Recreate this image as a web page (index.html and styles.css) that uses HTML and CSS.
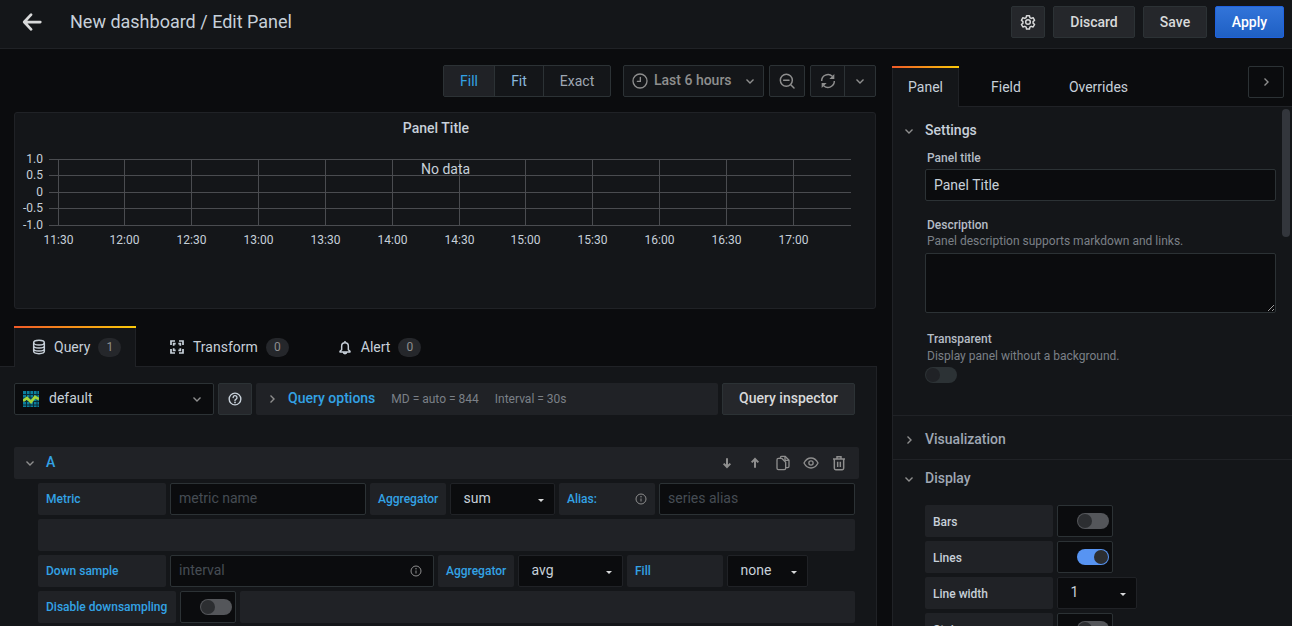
FILE: index.html
```html
<!DOCTYPE html>
<html lang="en">
<head>
<meta charset="utf-8">
<title>Edit Panel</title>
<link rel="stylesheet" href="styles.css">
</head>
<body>
<header class="topbar">
  <svg class="back" viewBox="0 0 24 24"><path d="M11 4 3.500 12 11 20M4 12h17" fill="none" stroke="currentColor" stroke-width="3" stroke-linecap="round" stroke-linejoin="round"/></svg>
  <div class="crumb">New dashboard / Edit Panel</div>
  <div class="top-actions">
    <button class="btn btn-icon"><svg class="ic16" viewBox="0 0 24 24"><g fill="none" stroke="currentColor" stroke-width="2.200" stroke-linejoin="round"><circle cx="12" cy="12" r="3.500"/><path d="M9.800 2.500h4.400l.6 3 2 1.100 2.900-1 2.200 3.800-2.300 2v2.300l2.300 2-2.200 3.800-2.900-1-2 1.100-.6 3H9.800l-.6-3-2-1.100-2.900 1-2.200-3.800 2.300-2v-2.300l-2.300-2 2.200-3.800 2.900 1 2-1.100z"/></g></svg></button>
    <button class="btn btn-discard">Discard</button>
    <button class="btn btn-save">Save</button>
    <button class="btn btn-apply">Apply</button>
  </div>
</header>
<div class="main">
  <section class="left">
    <div class="toolbar">
      <div class="seg">
        <span class="seg-item active">Fill</span><span class="seg-item fit">Fit</span><span class="seg-item exact">Exact</span>
      </div>
      <div class="tool time">
        <svg class="ic16" viewBox="0 0 24 24"><g fill="none" stroke="currentColor" stroke-width="2" stroke-linecap="round"><circle cx="12" cy="12" r="10.500"/><path d="M12.500 6.500v6H8"/></g></svg>
        <span class="time-text">Last 6 hours</span>
        <svg class="chev" viewBox="0 0 12 12"><path d="M2.500 4.500 6 8l3.500-3.500" fill="none" stroke="currentColor" stroke-width="1.400"/></svg>
      </div>
      <div class="tool zoomout">
        <svg class="ic16" viewBox="0 0 24 24"><g fill="none" stroke="currentColor" stroke-width="2.200" stroke-linecap="round"><circle cx="11" cy="11" r="9"/><path d="M7 11h8M18 18l4.500 4.500"/></g></svg>
      </div>
      <div class="tool refresh">
        <span class="refresh-a"><svg class="ic16 sync" viewBox="0 0 24 24"><path d="M2.500 12A9.500 9.500 0 0 1 18.500 5" fill="none" stroke="currentColor" stroke-width="2.200"/><path d="M21.500 12A9.500 9.500 0 0 1 5.500 19" fill="none" stroke="currentColor" stroke-width="2.200"/><path d="M21.500 1.500v7.500H14zM2.500 22.500V15H10z" fill="currentColor"/></svg></span>
        <span class="refresh-b"><svg class="chev" viewBox="0 0 12 12"><path d="M2.500 4.500 6 8l3.500-3.500" fill="none" stroke="currentColor" stroke-width="1.400"/></svg></span>
      </div>
    </div>
    <div class="panel">
      <div class="panel-title">Panel Title</div>
      <svg class="chart" viewBox="0 0 860 120" aria-label="Empty graph">
        <g class="grid">
          <path d="M34 13.500H836M34 29.500H836M34 46.500H836M34 62.500H836M34 79.500H836"/>
          <path d="M43.500 13V80M109.500 13V80M176.500 13V80M243.500 13V80M310.500 13V80M377.500 13V80M444.500 13V80M510.500 13V80M577.500 13V80M644.500 13V80M711.500 13V80M778.500 13V80"/>
        </g>
        <g class="ylab">
          <text x="28" y="17">1.0</text><text x="28" y="33">0.5</text><text x="28" y="50">0</text><text x="28" y="66">-0.5</text><text x="28" y="83">-1.0</text>
        </g>
        <g class="xlab">
          <text x="43.500" y="98">11:30</text><text x="109.500" y="98">12:00</text><text x="176.500" y="98">12:30</text><text x="243.500" y="98">13:00</text><text x="310.500" y="98">13:30</text><text x="377.500" y="98">14:00</text><text x="444.500" y="98">14:30</text><text x="510.500" y="98">15:00</text><text x="577.500" y="98">15:30</text><text x="644.500" y="98">16:00</text><text x="711.500" y="98">16:30</text><text x="778.500" y="98">17:00</text>
        </g>
      </svg>
      <div class="nodata">No data</div>
    </div>
    <nav class="qtabs">
      <div class="qtab on">
        <svg class="ic16" viewBox="0 0 24 24"><g fill="none" stroke="currentColor" stroke-width="2.200"><ellipse cx="12" cy="5.500" rx="8" ry="3.500"/><path d="M4 5.500v13c0 2 3.600 3.500 8 3.500s8-1.500 8-3.500v-13M4 10c0 2 3.600 3.500 8 3.500s8-1.500 8-3.500M4 14.500c0 2 3.600 3.500 8 3.500s8-1.500 8-3.500"/></g></svg>
        <span>Query</span><span class="count">1</span>
      </div>
      <div class="qtab tab-transform">
        <svg class="ic16" viewBox="0 0 24 24"><g fill="none" stroke="currentColor" stroke-width="2.600"><path d="M3 9V3h6M15 3h6v6M21 15v6h-6M9 21H3v-6"/><path d="M7 10V7h3M14 7h3v3M17 14v3h-3M10 17H7v-3"/></g></svg>
        <span>Transform</span><span class="count">0</span>
      </div>
      <div class="qtab tab-alert">
        <svg class="ic16" viewBox="0 0 24 24"><g fill="none" stroke="currentColor" stroke-width="2.200" stroke-linejoin="round"><path d="M7 16v-5.500a5 5 0 0 1 10 0V16l2.500 2.500v1h-15v-1zM9.500 19.500a2.500 2.500 0 0 0 5 0M12 3v2.500"/></g></svg>
        <span>Alert</span><span class="count">0</span>
      </div>
    </nav>
    <div class="qpane">
      <div class="src-row">
        <div class="ds">
          <svg class="ds-logo" viewBox="0 0 16 16"><rect width="16" height="16" fill="#0b7f9c"/><path d="M0 3.500h16M0 7h16M0 10.500h16M0 14h16M3.500 0v16M7 0v16M10.500 0v16M14 0v16" stroke="#0a2a38" stroke-width="1"/><path d="M0 10 4 7l4 4 4-5 4 2" fill="none" stroke="#a5d63a" stroke-width="2.800"/></svg>
          <span class="ds-name">default</span>
          <svg class="chev" viewBox="0 0 12 12"><path d="M2.500 4.500 6 8l3.500-3.500" fill="none" stroke="currentColor" stroke-width="1.400"/></svg>
        </div>
        <div class="help"><svg class="ic14" viewBox="0 0 24 24"><g fill="none" stroke="currentColor" stroke-width="2.400" stroke-linecap="round"><circle cx="12" cy="12" r="10"/><path d="M8.800 9.500a3.300 3.300 0 1 1 4.800 3c-1 .6-1.600 1.100-1.600 2"/></g><circle cx="12" cy="17.800" r="1.500" fill="currentColor"/></svg></div>
        <div class="qopts">
          <svg class="chev-r" viewBox="0 0 12 12"><path d="M4.500 2.500 8 6l-3.500 3.500" fill="none" stroke="currentColor" stroke-width="1.400"/></svg>
          <span class="qopts-title">Query options</span>
          <span class="qopts-meta">MD = auto = 844</span>
          <span class="qopts-meta">Interval = 30s</span>
        </div>
        <button class="btn btn-inspector">Query inspector</button>
      </div>
      <div class="qhead">
        <svg class="chev" viewBox="0 0 12 12"><path d="M2.500 4.500 6 8l3.500-3.500" fill="none" stroke="currentColor" stroke-width="1.400"/></svg>
        <span class="qletter">A</span>
        <div class="qicons">
          <svg class="ic16" viewBox="0 0 24 24"><path d="M12 5v13M7 13l5 5 5-5" fill="none" stroke="currentColor" stroke-width="3"/></svg>
          <svg class="ic16" viewBox="0 0 24 24"><path d="M12 19V6M7 11l5-5 5 5" fill="none" stroke="currentColor" stroke-width="3"/></svg>
          <svg class="ic16" viewBox="0 0 24 24"><g fill="none" stroke="currentColor" stroke-width="2" stroke-linejoin="round"><path d="M8 5V4a2 2 0 0 1 2-2h5l6 6v9a2 2 0 0 1-2 2h-3"/><path d="M15 2v6h6"/><path d="M3 7a2 2 0 0 1 2-2h5l6 6v9a2 2 0 0 1-2 2H5a2 2 0 0 1-2-2z"/></g></svg>
          <svg class="ic16" viewBox="0 0 24 24"><g fill="none" stroke="currentColor" stroke-width="2"><path d="M1.500 12c2.500-4.800 6.200-7.500 10.500-7.500s8 2.700 10.500 7.500c-2.500 4.800-6.200 7.500-10.500 7.500S4 16.800 1.500 12z"/><circle cx="12" cy="12" r="3.200"/></g></svg>
          <svg class="ic16" viewBox="0 0 24 24"><g fill="none" stroke="currentColor" stroke-width="2.200"><path d="M3 6h18M9 6V2.500h6V6M5 6v14a2 2 0 0 0 2 2h10a2 2 0 0 0 2-2V6M10 10v8M14 10v8"/></g></svg>
        </div>
      </div>
      <div class="rows">
        <div class="frow">
          <label class="flabel w128">Metric</label>
          <div class="finput w196"><span class="ph">metric name</span></div>
          <label class="flabel w76">Aggregator</label>
          <div class="fselect w105"><span>sum</span><i class="caret"></i></div>
          <label class="flabel w96 alias">Alias:<svg class="ic12" viewBox="0 0 24 24"><g fill="none" stroke="currentColor" stroke-width="2"><circle cx="12" cy="12" r="10"/><path d="M12 11v6"/></g><circle cx="12" cy="7.500" r="1.500" fill="currentColor"/></svg></label>
          <div class="finput grow"><span class="ph">series alias</span></div>
        </div>
        <div class="frow"><div class="filler"></div></div>
        <div class="frow">
          <label class="flabel w128">Down sample</label>
          <div class="finput w264"><span class="ph">interval</span><svg class="ic12" viewBox="0 0 24 24"><g fill="none" stroke="currentColor" stroke-width="2"><circle cx="12" cy="12" r="10"/><path d="M12 11v6"/></g><circle cx="12" cy="7.500" r="1.500" fill="currentColor"/></svg></div>
          <label class="flabel w76">Aggregator</label>
          <div class="fselect w105"><span>avg</span><i class="caret"></i></div>
          <label class="flabel w96">Fill</label>
          <div class="fselect w81"><span>none</span><i class="caret"></i></div>
        </div>
        <div class="frow">
          <label class="flabel w138">Disable downsampling</label>
          <div class="switchbox"><span class="sw"></span></div>
          <div class="filler"></div>
        </div>
      </div>
    </div>
  </section>
  <aside class="right">
    <nav class="ptabs">
      <div class="ptab on">Panel</div>
      <div class="ptab field">Field</div>
      <div class="ptab over">Overrides</div>
      <div class="collapse"><svg class="chev-r" viewBox="0 0 12 12"><path d="M4.500 2.500 8 6l-3.500 3.500" fill="none" stroke="currentColor" stroke-width="1.400"/></svg></div>
    </nav>
    <div class="pbody">
      <div class="scrollthumb"></div>
      <section class="group settings">
        <h3 class="ghead"><svg class="chev" viewBox="0 0 12 12"><path d="M2.500 4.500 6 8l3.500-3.500" fill="none" stroke="currentColor" stroke-width="1.400"/></svg>Settings</h3>
        <div class="fld first">
          <div class="lbl">Panel title</div>
          <div class="pinput">Panel Title</div>
        </div>
        <div class="fld descf">
          <div class="lbl">Description</div>
          <div class="sub">Panel description supports markdown and links.</div>
          <textarea class="parea" aria-label="Description"></textarea>
        </div>
        <div class="fld transp">
          <div class="lbl">Transparent</div>
          <div class="sub">Display panel without a background.</div>
          <span class="sw dark"></span>
        </div>
      </section>
      <section class="group viz">
        <h3 class="ghead"><svg class="chev-r" viewBox="0 0 12 12"><path d="M4.500 2.500 8 6l-3.500 3.500" fill="none" stroke="currentColor" stroke-width="1.400"/></svg>Visualization</h3>
      </section>
      <section class="group display">
        <h3 class="ghead"><svg class="chev" viewBox="0 0 12 12"><path d="M2.500 4.500 6 8l3.500-3.500" fill="none" stroke="currentColor" stroke-width="1.400"/></svg>Display</h3>
        <div class="drows">
          <div class="frow"><label class="flabel w128 plain">Bars</label><div class="switchbox"><span class="sw"></span></div></div>
          <div class="frow"><label class="flabel w128 plain">Lines</label><div class="switchbox"><span class="sw on"></span></div></div>
          <div class="frow"><label class="flabel w128 plain">Line width</label><div class="fselect w80"><span>1</span><i class="caret"></i></div></div>
          <div class="frow"><label class="flabel w128 plain">Staircase</label><div class="switchbox"><span class="sw"></span></div></div>
        </div>
      </section>
    </div>
  </aside>
</div>
</body>
</html>
```

FILE: styles.css
```css
* { box-sizing: border-box; }
html, body { margin: 0; height: 100%; overflow: hidden; }
body { background: #0b0c0e; color: #c7d0d9; font: 14px/1.5 Roboto, sans-serif; }
svg { display: block; flex: none; }
.ic12 { width: 12px; height: 12px; }
.ic14 { width: 14px; height: 14px; }
.ic16 { width: 16px; height: 16px; }
.chev, .chev-r { width: 12px; height: 12px; color: #8e8e8e; }

.topbar { height: 49px; background: #141619; border-bottom: 1px solid #202226; display: flex; align-items: center; padding: 0 8px 4px 21px; }
.back { width: 22px; height: 22px; color: #d8d9da; }
.crumb { margin-left: 27px; font-size: 18px; line-height: 24px; color: #c7d0d9; }
.top-actions { margin-left: auto; display: flex; gap: 8px; align-items: center; }
.btn { height: 32px; border: 1px solid #2c3235; border-radius: 2px; background: #25272b; color: #d8d9da; font: 500 14px/1 Roboto, sans-serif; padding: 0; display: flex; align-items: center; justify-content: center; }
.btn-icon { width: 34px; }
.btn-discard { width: 82px; }
.btn-save { width: 64px; }
.btn-apply { width: 69px; border-color: #1f62e0; color: #fff; background: linear-gradient(180deg, #3274d9, #1f60c4); }

.main { display: flex; height: 577px; }
.left { width: 877px; flex: none; display: flex; flex-direction: column; }
.toolbar { height: 63px; padding: 16px 1px 0 443px; display: flex; align-items: flex-start; }
.seg { display: flex; height: 32px; border: 1px solid #2c3235; border-radius: 2px; background: #141619; color: #8e8e8e; }
.seg-item { display: flex; align-items: center; justify-content: center; border-left: 1px solid #2c3235; }
.seg-item.active { width: 50px; border-left: 0; background: #202226; color: #33a2e5; }
.seg-item.fit { width: 49px; color: #8ab8dd; }
.seg-item.exact { width: 67px; color: #9fa7b3; }
.tool { height: 32px; border: 1px solid #2c3235; border-radius: 2px; background: #141619; color: #8e8e8e; display: flex; align-items: center; }
.time { width: 142px; margin-left: 12px; padding-left: 8px; }
.time-text { margin-left: 6px; padding-bottom: 2px; font-weight: 500; }
.time .chev { margin-left: auto; margin-right: 7px; }
.zoomout { width: 36px; margin-left: 5px; justify-content: center; }
.refresh { width: 66px; margin-left: 5px; }
.refresh-a { width: 34px; height: 100%; display: flex; align-items: center; justify-content: center; border-right: 1px solid #2c3235; }
.refresh-b { flex: 1; display: flex; justify-content: center; }

.panel { position: relative; margin-left: 14px; width: 862px; height: 197px; background: #141619; border: 1px solid #202226; border-radius: 3px; }
.panel-title { height: 31px; padding-right: 18px; text-align: center; font-weight: 500; line-height: 30px; color: #c7d0d9; }
.chart { width: 860px; height: 120px; margin-top: 2px; }
.grid path { fill: none; stroke: #4a4c50; stroke-width: 1; }
.chart text { font: 12px Roboto, sans-serif; fill: #c7d0d9; }
.ylab text { text-anchor: end; }
.xlab text { text-anchor: middle; }
.nodata { position: absolute; left: 406px; top: 46px; color: #c7d0d9; line-height: 20px; }

.qtabs { display: flex; height: 40px; margin-top: 17px; padding-left: 14px; }
.qtab { height: 41px; display: flex; align-items: center; padding: 1px 16px 0; gap: 8px; position: relative; }
.qtab.on { width: 122px; padding: 0 0 0 16px; background: #141619; border: 1px solid #202226; border-bottom: 0; border-radius: 3px 3px 0 0; }
.qtab.on svg { margin-right: -1px; }
.qtab.on::before, .ptab.on::before { content: ""; position: absolute; left: -1px; right: -1px; top: -1px; height: 2px; background: linear-gradient(90deg, #f05a28, #fbca0a); }
.tab-transform { margin-left: 17px; }
.tab-alert { margin-left: 16px; }
.count { min-width: 23px; height: 19px; border-radius: 10px; background: #25272b; color: #8e8e8e; font-size: 12px; text-align: center; line-height: 19px; }

.qpane { flex: 1; background: #141619; border-top: 1px solid #202226; border-right: 1px solid #202226; padding: 16px 0 0 14px; overflow: hidden; }
.src-row { display: flex; gap: 4px; height: 32px; padding-right: 21px; }
.ds { width: 200px; background: #0b0c0e; border: 1px solid #2c3235; border-radius: 2px; display: flex; align-items: center; padding-left: 8px; }
.ds-logo { width: 16px; height: 16px; }
.ds-name { margin-left: 10px; padding-bottom: 2px; color: #c7d0d9; }
.ds .chev { margin-left: auto; margin-right: 10px; }
.help { width: 34px; background: #25272b; border: 1px solid #2c3235; border-radius: 2px; display: flex; align-items: center; justify-content: center; color: #c7d0d9; }
.qopts { flex: 1; background: #202226; border-radius: 2px; display: flex; align-items: center; padding-left: 10px; }
.qopts-title { margin-left: 10px; padding-bottom: 2px; color: #33a2e5; font-weight: 500; }
.qopts-meta { margin-left: 16px; font-size: 12px; color: #7b8087; }
.btn-inspector { width: 133px; padding-bottom: 2px; }

.qhead { height: 32px; margin-top: 32px; width: 845px; background: #202226; border-radius: 2px; display: flex; align-items: center; padding-left: 10px; }
.qhead .chev { color: #8e8e8e; }
.qletter { margin-left: 10px; padding-bottom: 2px; color: #33a2e5; font-weight: 500; }
.qicons { margin-left: auto; margin-right: 12px; display: flex; align-items: center; gap: 12px; color: #8e8e8e; }
.rows { margin-top: 4px; padding-left: 24px; width: 841px; display: flex; flex-direction: column; gap: 4px; }
.frow { display: flex; gap: 4px; height: 32px; flex: none; }
.flabel { background: #202226; border-radius: 2px; color: #33a2e5; font-size: 12px; font-weight: 500; display: flex; align-items: center; padding: 0 8px; flex: none; white-space: nowrap; }
.flabel.plain { color: #c7d0d9; padding-top: 2px; }
.w76 { width: 76px; }
.w96 { width: 96px; }
.w128 { width: 128px; }
.w138 { width: 138px; }
.w105 { width: 105px; }
.w81 { width: 81px; }
.w80 { width: 80px; }
.w196 { width: 196px; }
.w264 { width: 264px; }
.alias { justify-content: space-between; }
.alias svg, .finput svg { color: #8e8e8e; }
.finput { background: #0b0c0e; border: 1px solid #2c3235; border-radius: 2px; display: flex; align-items: center; justify-content: space-between; padding: 0 11px 0 8px; flex: none; }
.finput.grow { flex: 1; }
.ph { color: #464c54; padding-bottom: 2px; }
.fselect { background: #0b0c0e; border: 1px solid #202226; border-radius: 2px; display: flex; align-items: center; justify-content: space-between; padding: 0 10px 0 12.5px; color: #c7d0d9; flex: none; }
.fselect span { padding-bottom: 2px; }
.caret { width: 0; height: 0; border: 3.5px solid transparent; border-top-color: #d8d9da; border-bottom: 0; margin-top: 3px; }
.filler { flex: 1; background: #202226; border-radius: 2px; }
.switchbox { width: 56px; background: #0b0c0e; border: 1px solid #2c3235; border-radius: 2px; display: flex; align-items: center; justify-content: flex-end; padding-right: 3px; flex: none; }
.sw { display: block; position: relative; width: 32px; height: 16px; border-radius: 8px; background: #54565a; }
.sw::after { content: ""; position: absolute; left: 1px; top: 1px; width: 14px; height: 14px; border-radius: 50%; background: #2c2e31; }
.sw.on { background: #5794f2; }
.sw.on::after { left: 17px; }
.sw.dark { background: #2c3235; }
.sw.dark::after { background: #202226; }

.right { flex: 1; min-width: 0; padding: 17px 0 0 15px; display: flex; flex-direction: column; }
.ptabs { height: 41px; display: flex; position: relative; flex: none; border-bottom: 1px solid #202226; }
.ptab { height: 41px; padding-top: 1px; display: flex; align-items: center; justify-content: center; position: relative; color: #c7d0d9; }
.ptab.on { width: 67px; padding-top: 0; background: #141619; border: 1px solid #202226; border-bottom: 0; border-radius: 3px 3px 0 0; }
.ptab.field { margin-left: 32px; }
.ptab.over { margin-left: 48px; }
.collapse { position: absolute; right: 8px; top: 0; width: 36px; height: 32px; border: 1px solid #2c3235; border-radius: 2px; display: flex; align-items: center; justify-content: center; }
.pbody { flex: 1; position: relative; background: #141619; border-left: 1px solid #202226; overflow: hidden; }
.scrollthumb { position: absolute; right: 2px; top: 2px; width: 8px; height: 128px; border-radius: 4px; background: #33363c; }
.group { border-bottom: 1px solid #202226; padding-left: 10px; }
.ghead { margin: 0; display: flex; align-items: center; gap: 10px; font-size: 14px; font-weight: 500; color: #c7d0d9; height: 21px; }
.settings { height: 309px; padding-top: 13px; }
.fld { margin-left: 22px; width: 351px; }
.first { margin-top: 8px; }
.lbl { font-size: 12px; font-weight: 500; line-height: 18px; color: #b4bcc5; padding-left: 2px; }
.sub { font-size: 12px; line-height: 15px; color: #7b8087; padding-left: 2px; }
.pinput { height: 32px; margin-top: 2px; background: #0b0c0e; border: 1px solid #2c3235; border-radius: 2px; display: flex; align-items: center; padding-left: 8px; }
.descf { margin-top: 15px; }
.parea { display: block; width: 351px; height: 60px; margin-top: 4px; background: #0b0c0e; border: 1px solid #2c3235; border-radius: 2px; }
.transp { margin-top: 17px; }
.transp .sub { margin-top: 1px; }
.transp .sw { margin-top: 3px; }
.viz { height: 44px; padding-top: 13px; }
.viz .ghead { color: #9fa7b3; }
.display { border-bottom: 0; padding-top: 8px; }
.display .ghead { color: #9fa7b3; }
.drows { margin: 16px 0 0 22px; display: flex; flex-direction: column; gap: 4px; }
```
